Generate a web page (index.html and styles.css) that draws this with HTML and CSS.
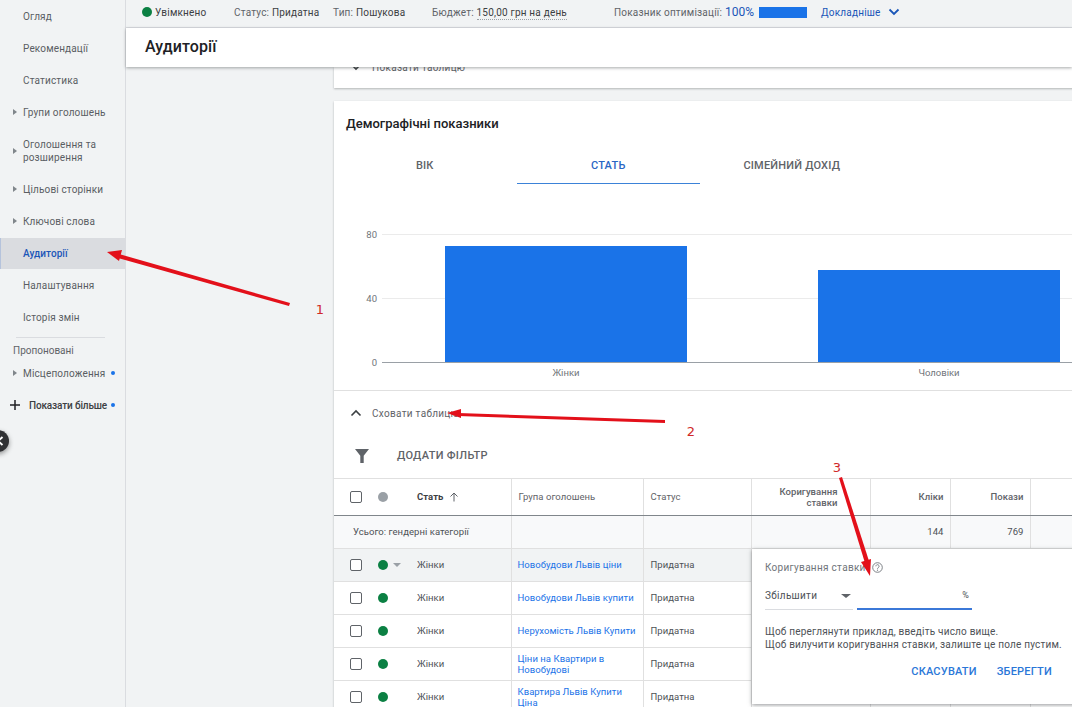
FILE: index.html
```html
<!DOCTYPE html>
<html lang="uk">
<head>
<meta charset="utf-8">
<title>Аудиторії</title>
<link rel="stylesheet" href="styles.css">
</head>
<body>
<div class="app">
  <nav class="sidebar">
    <a class="nav-item">Огляд</a>
    <a class="nav-item">Рекомендації</a>
    <a class="nav-item">Статистика</a>
    <a class="nav-item has-arrow">Групи оголошень</a>
    <a class="nav-item has-arrow tall">Оголошення та розширення</a>
    <a class="nav-item has-arrow">Цільові сторінки</a>
    <a class="nav-item has-arrow">Ключові слова</a>
    <a class="nav-item active">Аудиторії</a>
    <a class="nav-item">Налаштування</a>
    <a class="nav-item">Історія змін</a>
    <div class="nav-divider"></div>
    <div class="nav-heading">Пропоновані</div>
    <a class="nav-item has-arrow short">Місцеположення<span class="nav-dot"></span></a>
    <a class="nav-more"><svg class="plus" width="10" height="10" viewBox="0 0 10 10"><path d="M5 0v10M0 5h10" fill="none" stroke="#202124" stroke-width="1.500"/></svg>Показати більше<span class="nav-dot"></span></a>
  </nav>

  <main class="main">
    <div class="statusbar">
      <span class="status-dot"></span>
      <span class="st st-on">Увімкнено</span>
      <span class="st st-status">Статус: <b>Придатна</b></span>
      <span class="st st-type">Тип: <b>Пошукова</b></span>
      <span class="st st-budget">Бюджет: <b class="dotted">150,00 грн на день</b></span>
      <span class="st st-score">Показник оптимізації:</span>
      <span class="score-val">100%</span>
      <span class="score-bar"></span>
      <span class="more-link">Докладніше</span>
      <svg class="more-chev" width="12" height="8" viewBox="0 0 12 8"><path d="M1.500 1.500 6 6l4.500-4.500" fill="none" stroke="#1a56b8" stroke-width="1.800"/></svg>
    </div>
    <header class="pagehead"><h1>Аудиторії</h1></header>

    <div class="content">
      <section class="card card-clipped">
        <div class="toggle-row toggle-clipped">
          <svg class="chev" width="12" height="8" viewBox="0 0 12 8"><path d="M1.500 1.500 6 6l4.500-4.500" fill="none" stroke="#3c4043" stroke-width="1.600"/></svg>
          <span>Показати таблицю</span>
        </div>
      </section>

      <section class="card card-main">
        <h2 class="card-title">Демографічні показники</h2>
        <div class="tabs">
          <div class="tab">ВІК</div>
          <div class="tab tab-active">СТАТЬ</div>
          <div class="tab">СІМЕЙНИЙ ДОХІД</div>
        </div>
        <svg class="chart" width="738" height="183" viewBox="0 0 738 183">
          <line x1="48" x2="738" y1="27.500" y2="27.500" class="grid"/>
          <line x1="48" x2="738" y1="91.500" y2="91.500" class="grid"/>
          <line x1="48" x2="738" y1="155.500" y2="155.500" class="axis"/>
          <text x="43" y="31" text-anchor="end" class="tick">80</text>
          <text x="43" y="95" text-anchor="end" class="tick">40</text>
          <text x="43" y="159" text-anchor="end" class="tick">0</text>
          <rect x="111" y="39" width="242" height="116" class="bar"/>
          <rect x="484" y="63" width="242" height="92" class="bar"/>
          <text x="232" y="169" text-anchor="middle" class="tick">Жінки</text>
          <text x="605" y="169" text-anchor="middle" class="tick">Чоловіки</text>
        </svg>
        <div class="toggle-row toggle-open">
          <svg class="chev" width="12" height="8" viewBox="0 0 12 8"><path d="M1.500 6.500 6 2l4.500 4.500" fill="none" stroke="#3c4043" stroke-width="1.600"/></svg>
          <span>Сховати таблицю</span>
        </div>
        <div class="filter-row">
          <svg width="16" height="14" viewBox="0 0 16 14"><path d="M1 0h14L9.700 6.800V14H6.300V6.800z" fill="#5f6368"/></svg>
          <span class="filter-text">ДОДАТИ ФІЛЬТР</span>
        </div>
        <table class="grid-table">
          <colgroup><col class="c1"><col class="c2"><col class="c3"><col class="c4"><col class="c5"><col class="c6"><col class="c7"></colgroup>
          <thead>
            <tr>
              <th><div class="lead"><span class="cb"></span><span class="dot dot-grey"></span><b class="sort">Стать</b><svg class="sort-arrow" width="10" height="10" viewBox="0 0 10 10"><path d="M5 9.500V1M1.500 4.500 5 1l3.500 3.500" fill="none" stroke="#5f6368" stroke-width="1"/></svg></div></th>
              <th>Група оголошень</th>
              <th>Статус</th>
              <th class="num adj">Коригування<br>ставки</th>
              <th class="num">Кліки</th>
              <th class="num">Покази</th>
              <th></th>
            </tr>
          </thead>
          <tbody>
            <tr class="total">
              <td class="total-label">Усього: гендерні категорії</td>
              <td></td><td></td><td></td>
              <td class="num">144</td><td class="num">769</td><td></td>
            </tr>
            <tr class="hovered">
              <td><div class="lead"><span class="cb"></span><span class="dot"></span><span class="caret"></span><span class="who">Жінки</span></div></td>
              <td><a class="link">Новобудови Львів ціни</a></td><td class="state">Придатна</td><td></td><td></td><td></td><td></td>
            </tr>
            <tr>
              <td><div class="lead"><span class="cb"></span><span class="dot"></span><span class="who">Жінки</span></div></td>
              <td><a class="link">Новобудови Львів купити</a></td><td class="state">Придатна</td><td></td><td></td><td></td><td></td>
            </tr>
            <tr>
              <td><div class="lead"><span class="cb"></span><span class="dot"></span><span class="who">Жінки</span></div></td>
              <td><a class="link">Нерухомість Львів Купити</a></td><td class="state">Придатна</td><td></td><td></td><td></td><td></td>
            </tr>
            <tr>
              <td><div class="lead"><span class="cb"></span><span class="dot"></span><span class="who">Жінки</span></div></td>
              <td><a class="link">Ціни на Квартири в Новобудові</a></td><td class="state">Придатна</td><td></td><td></td><td></td><td></td>
            </tr>
            <tr>
              <td><div class="lead"><span class="cb"></span><span class="dot"></span><span class="who">Жінки</span></div></td>
              <td><a class="link">Квартира Львів Купити Ціна</a></td><td class="state">Придатна</td><td></td><td></td><td></td><td></td>
            </tr>
          </tbody>
        </table>
      </section>
    </div>
  </main>

  <div class="collapse-btn">
    <svg width="8" height="10" viewBox="0 0 8 10"><path d="M6.500 1 2 5l4.500 4" fill="none" stroke="#fff" stroke-width="2"/></svg>
  </div>

  <div class="popup">
    <div class="pop-label">Коригування ставки
      <svg class="help" width="11" height="11" viewBox="0 0 11 11"><circle cx="5.500" cy="5.500" r="4.800" fill="none" stroke="#70757a" stroke-width=".9"/><path d="M3.900 4.300a1.600 1.600 0 1 1 2.500 1.300c-.6.400-.9.600-.9 1.200" fill="none" stroke="#70757a" stroke-width=".9"/><circle cx="5.500" cy="8.200" r=".6" fill="#70757a"/></svg>
    </div>
    <div class="pop-fields">
      <div class="pop-select"><span>Збільшити</span><span class="pop-caret"></span></div>
      <div class="pop-input"><span>%</span></div>
    </div>
    <p class="pop-text">Щоб переглянути приклад, введіть число вище.<br>Щоб вилучити коригування ставки, залиште це поле пустим.</p>
    <div class="pop-actions"><a class="pop-btn">СКАСУВАТИ</a><a class="pop-btn">ЗБЕРЕГТИ</a></div>
  </div>

  <svg class="annotations" width="1072" height="707" viewBox="0 0 1072 707">
    <g class="ann-head">
      <path d="M290 303 289 306 118 258 119 254z"/>
      <path d="M665 420 665 423 458 416 458 413z"/>
      <path d="M842 477 839 478 865 563 869 561z"/>
      <path d="M107 252 122 250 119 261z"/>
      <path d="M447 413 461 409 461 418z"/>
      <path d="M870 576 861 562 871 559z"/>
    </g>
    <text x="320" y="314" class="ann-num" text-anchor="middle">1</text>
    <text x="691" y="436" class="ann-num" text-anchor="middle">2</text>
    <text x="837" y="472" class="ann-num" text-anchor="middle">3</text>
  </svg>
</div>
</body>
</html>
```

FILE: styles.css
```css
* { box-sizing: border-box; }
html, body { margin: 0; padding: 0; height: 100%; overflow: hidden; }
body { font-family: Roboto, "Liberation Sans", sans-serif; font-size: 10px; color: #3c4043; background: #f1f3f4; }
.app { position: relative; display: flex; width: 1072px; height: 707px; overflow: hidden; }

/* sidebar */
.sidebar { width: 126px; flex: none; border-right: 1px solid #dadce0; background: #f1f3f4; }
.nav-item { position: relative; display: flex; align-items: center; height: 32px; padding-left: 23px; padding-right: 12px; font-size: 10px; line-height: 13px; letter-spacing: .15px; color: #5a5e63; }
.nav-item.tall { height: 45px; }
.nav-item.short { height: 24px; margin-top: 4px; }
.has-arrow::before { content: ""; position: absolute; left: 13px; top: 50%; margin-top: -3px; border-left: 4px solid #80868b; border-top: 3px solid transparent; border-bottom: 3px solid transparent; }
.nav-item.active { background: #dadce0; color: #1a56b8; font-weight: 500; letter-spacing: .05px; border-left: 1px solid #b5c3dc; padding-left: 22px; margin-top: 1px; height: 31px; }
.nav-divider { height: 1px; background: #dadce0; margin: 4px 20px 0 16px; }
.nav-heading { padding: 6px 0 0 13px; font-size: 10px; line-height: 13px; letter-spacing: 0; color: #5f6368; }
.nav-dot { width: 4px; height: 4px; border-radius: 50%; background: #1a73e8; position: absolute; left: 111px; top: 50%; margin-top: -2px; }
.nav-more { position: relative; display: flex; align-items: center; height: 24px; margin-top: 8px; padding-left: 10px; font-size: 10px; font-weight: 500; letter-spacing: -.15px; color: #3c4043; }
.plus { flex: none; margin-right: 9px; }

/* main column */
.main { flex: 1; min-width: 0; display: flex; flex-direction: column; }
.statusbar { display: flex; align-items: center; height: 28px; flex: none; padding: 0 0 3px 16px; border-bottom: 1px solid #dadce0; background: #f1f3f4; font-size: 10px; letter-spacing: .2px; color: #5f6368; white-space: nowrap; }
.status-dot { width: 10px; height: 10px; border-radius: 50%; background: #0b8043; }
.statusbar b { font-weight: 400; color: #3c4043; }
.st-on { margin-left: 3px; color: #3c4043; width: 79px; }
.st-status { width: 99px; }
.st-type { width: 99px; }
.st-budget { width: 182px; }
.dotted { border-bottom: 1px dotted #9aa0a6; padding-bottom: 1px; }
.score-val { margin-left: 3px; font-size: 12px; letter-spacing: 0; color: #1a56b8; }
.score-bar { width: 48px; height: 11px; margin-left: 5px; background: #1a73e8; }
.more-link { margin-left: 14px; color: #1a56b8; }
.more-chev { margin-left: 7px; }
.pagehead { position: relative; z-index: 2; height: 39px; flex: none; display: flex; align-items: center; padding-left: 19px; background: #fff; box-shadow: 0 1px 3px rgba(60, 64, 67, .45); }
.pagehead h1 { margin: 0 0 2px; font-size: 16px; font-weight: 500; letter-spacing: .1px; color: #202124; }

/* content */
.content { flex: 1; min-height: 0; overflow: hidden; padding-left: 208px; }
.card { width: 760px; background: #fff; box-shadow: 0 1px 2px rgba(60, 64, 67, .35); }
.card-clipped { height: 21px; }
.toggle-row { display: flex; align-items: center; gap: 10px; height: 20px; padding-left: 16px; font-size: 10px; letter-spacing: .3px; color: #5f6368; }
.toggle-clipped { position: relative; top: -10px; }
.card-main { margin-top: 13px; }
.card-title { margin: 0; padding: 16px 0 0 12px; height: 47px; font-size: 13px; line-height: 14px; font-weight: 500; letter-spacing: 0; color: #202124; }
.tabs { display: flex; height: 36px; margin-left: -1px; }
.tab { width: 183.5px; display: flex; align-items: center; justify-content: center; padding-bottom: 1px; font-size: 11px; font-weight: 500; letter-spacing: .2px; color: #5f6368; }
.tab-active { color: #2a66c4; border-bottom: 1px solid #3b82d8; }
.chart { display: block; margin-top: 23px; }
.chart .grid { stroke: #ebebeb; stroke-width: 1; }
.chart .axis { stroke: #9aa0a6; stroke-width: 1; }
.chart .tick { font: 9.500px Roboto, sans-serif; fill: #70757a; }
.chart .bar { fill: #1a73e8; }
.toggle-open { height: 45px; border-top: 1px solid #e0e0e0; }
.filter-row { display: flex; align-items: center; height: 43px; padding-left: 20px; padding-bottom: 2px; }
.filter-text { margin-left: 27px; font-size: 11px; font-weight: 500; letter-spacing: .3px; color: #5f6368; }

/* table */
.grid-table { table-layout: fixed; width: 760px; border-collapse: collapse; font-size: 9.500px; letter-spacing: .05px; }
.c1 { width: 177px; } .c2 { width: 132px; } .c3 { width: 108px; } .c4 { width: 119px; } .c5 { width: 80px; } .c6 { width: 80px; } .c7 { width: 64px; }
.grid-table th { height: 37px; padding: 0 6px 1px 7px; text-align: left; font-weight: 400; line-height: 11px; color: #5f6368; border-top: 1px solid #e0e0e0; border-bottom: 1px solid #80868b; border-left: 1px solid #e0e0e0; }
.grid-table th:first-child, .grid-table td:first-child { border-left: 0; padding: 0 0 1px; }
.grid-table td { height: 33px; padding: 0 6px 1px; line-height: 11px; color: #4d5156; border-bottom: 1px solid #e0e0e0; border-left: 1px solid #e0e0e0; }
.grid-table td.state { padding-left: 7px; }
.grid-table .num { text-align: right; }
.grid-table th.num { font-weight: 500; }
.grid-table th.adj { padding-right: 32px; }
.total td { background: #f8f9fa; }
.grid-table .total td.total-label { padding-left: 19px; }
.hovered td { background: #f1f3f4; }
.lead { display: flex; align-items: center; padding-left: 16px; }
.cb { width: 12px; height: 12px; flex: none; border: 1px solid #5f6368; border-radius: 2px; background: #fff; }
.dot { width: 10px; height: 10px; flex: none; margin: 0 29px 0 16px; border-radius: 50%; background: #0b8043; }
.dot-grey { background: #9aa0a6; }
.caret { width: 0; height: 0; margin-left: -24px; margin-right: 16px; border-top: 4px solid #9aa0a6; border-left: 4px solid transparent; border-right: 4px solid transparent; }
.sort { font-weight: 700; color: #3c4043; }
.sort-arrow { margin-left: 6px; }
.link { color: #1a73e8; }

/* overlays */
.collapse-btn { position: absolute; left: -13px; top: 430px; width: 22px; height: 22px; display: flex; align-items: center; justify-content: flex-end; padding-right: 5px; border-radius: 50%; background: #303134; box-shadow: 0 2px 5px rgba(0, 0, 0, .4); }
.popup { position: absolute; left: 752px; top: 549px; width: 330px; height: 155px; padding: 12px 0 0 13px; background: #fff; box-shadow: 0 1px 4px rgba(60, 64, 67, .55); font-size: 10px; letter-spacing: .2px; color: #4d5156; }
.pop-label { display: flex; align-items: center; gap: 6px; height: 13px; letter-spacing: .3px; color: #70757a; }
.pop-fields { display: flex; gap: 4px; height: 28px; margin-top: 8px; }
.pop-select { position: relative; width: 88px; display: flex; align-items: center; justify-content: space-between; padding-right: 2px; letter-spacing: .3px; border-bottom: 1px solid #dadce0; }
.pop-caret { border-top: 4px solid #5f6368; border-left: 5px solid transparent; border-right: 5px solid transparent; }
.pop-input { width: 115px; display: flex; align-items: center; justify-content: flex-end; padding-right: 3px; border-bottom: 2px solid #3b78d8; font-size: 9px; }
.pop-text { margin: 15px 0 0; line-height: 13px; }
.pop-actions { display: flex; justify-content: flex-end; gap: 20px; width: 287px; margin-top: 14px; }
.pop-btn { font-size: 11px; font-weight: 500; letter-spacing: .2px; color: #2a77d8; }
.annotations { position: absolute; left: 0; top: 0; z-index: 5; pointer-events: none; }
.ann-head path { fill: #e3101a; }
.ann-num { font: 13px "DejaVu Sans", sans-serif; fill: #d02828; }
```
